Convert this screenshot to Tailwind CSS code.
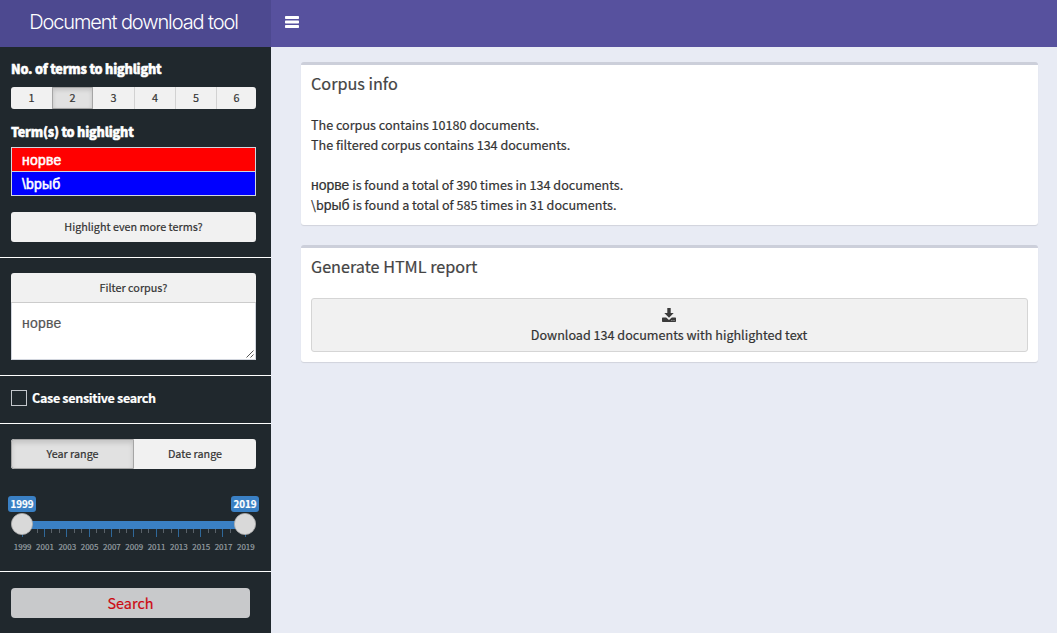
<!DOCTYPE html>
<html lang="en">
<head>
<meta charset="utf-8">
<title>Document download tool</title>
<script src="https://cdn.jsdelivr.net/npm/@tailwindcss/browser@4"></script>
</head>
<body class="flex h-[633px] w-[1057px] flex-col overflow-hidden bg-[#e8ebf4] font-['Noto_Sans_CJK_SC',sans-serif] text-[12.6px] leading-5 text-[#333] [-webkit-text-stroke:0.2px_currentColor]">
<header class="flex h-[47px] shrink-0 bg-[#57519e] text-white">
  <div class="flex w-[271px] items-center justify-center bg-[#4d4990] pr-[4px] pb-[3px] font-['Inter',sans-serif] text-[20px] font-light tracking-[-1.1px] whitespace-nowrap [-webkit-text-stroke:0]"><span>Document download tool</span></div>
  <button class="flex w-[42px] items-start justify-center pt-4" aria-label="Toggle sidebar">
    <svg width="14" height="12" viewBox="0 0 14 12" fill="white"><rect y="0" width="14" height="3" rx=".7"/><rect y="4.5" width="14" height="3" rx=".7"/><rect y="9" width="14" height="3" rx=".7"/></svg>
  </button>
</header>
<div class="flex min-h-0 flex-1">
  <aside class="flex w-[271px] shrink-0 flex-col bg-[#20282d]">
    <section class="h-[211px] border-b border-white pr-[15px] pl-[11px] pt-[12px]">
      <h3 class="h-5 font-black tracking-[-0.2px] text-white [-webkit-text-stroke:0.5px_white]">No. of terms to highlight</h3>
      <div class="mt-[8px] flex h-[22px] overflow-hidden rounded-[3px] bg-[#f1f1f1] text-center text-[10.8px] leading-[21px]">
        <div class="w-[41px]">1</div>
        <div class="w-[41px] border border-[#a5a5a5] bg-[#e1e1e1] leading-[19px] shadow-[inset_0_2px_4px_rgba(0,0,0,0.14)]">2</div>
        <div class="w-[41px]">3</div>
        <div class="w-[41px] border-l border-[#d2d2d2]">4</div>
        <div class="w-[41px] border-l border-[#d2d2d2]">5</div>
        <div class="flex-1 border-l border-[#d2d2d2]">6</div>
      </div>
      <h3 class="mt-[13px] h-5 font-black tracking-[-0.2px] text-white [-webkit-text-stroke:0.5px_white]">Term(s) to highlight</h3>
      <div class="mt-[5px] h-[49px] border border-[#d2d6de] font-['Liberation_Sans',sans-serif] text-sm leading-6 font-normal tracking-[0.2px] text-white [-webkit-text-stroke:0.5px_white]">
        <div class="h-[24px] border-b border-[#d2d6de] bg-[#f00] px-[10px]">норве</div>
        <div class="h-[23px] bg-[#00f] px-[10px]">\bрыб</div>
      </div>
      <button class="mt-4 block h-[30px] w-full rounded-[3px] bg-[#f1f1f1] pb-[2px] text-[10.8px]">Highlight even more terms?</button>
    </section>
    <section class="h-[118px] border-b border-white pr-[15px] pl-[11px] pt-[15px]">
      <button class="block h-[30px] w-full rounded-t-[3px] border-b border-[#ccc] bg-[#f1f1f1] pb-[2px] text-[10.8px]">Filter corpus?</button>
      <div class="flex h-[57px] items-end justify-between border border-t-0 border-[#d2d6de] bg-white pl-[10px] font-['Liberation_Sans',sans-serif] text-sm text-[#555]">
        <span class="self-start pt-[10px] tracking-[0.2px]">норве</span>
        <svg class="m-[1px]" width="8" height="8" viewBox="0 0 8 8" stroke="#444" fill="none" stroke-width=".9"><path d="M0.5 7.5L7.5 .5M4.5 7.5L7.5 4.5"/></svg>
      </div>
    </section>
    <section class="flex h-12 items-start border-b border-white px-[11px] pt-[12px] font-bold tracking-[-0.35px] text-white">
      <div class="mt-[2px] mr-[5px] size-4 border border-[#c4c7cc]"></div><span>Case sensitive search</span>
    </section>
    <section class="h-[148px] border-b border-white px-[8px] pt-[15px]">
      <div class="mr-[7px] ml-[3px] flex h-[30px] overflow-hidden rounded-[3px] bg-[#f1f1f1] text-center text-[10.8px] leading-[27px]">
        <div class="w-[123px] rounded-l-[3px] border border-[#a5a5a5] bg-[#e1e1e1] shadow-[inset_0_3px_5px_rgba(0,0,0,0.13)]">Year range</div>
        <div class="flex-1 pt-px">Date range</div>
      </div>
      <div class="mt-[27px] flex justify-between text-center text-[9.8px] leading-4 font-bold text-white">
        <span class="h-4 w-7 rounded-[3px] bg-[#3a80c4]">1999</span><span class="mr-1 h-4 w-7 rounded-[3px] bg-[#3a80c4]">2019</span>
      </div>
      <div class="mt-[1px] h-6 w-[255px]">
        <svg class="block" width="255" height="26" viewBox="0 0 255 26">
          <rect x="14" y="8" width="223" height="8" fill="#3a80c4"/>
          <path stroke="#2f6899" d="M14.5 16v8M36.5 16v8M58.5 16v8M81.5 16v8M103.5 16v8M125.5 16v8M148.5 16v8M170.5 16v8M192.5 16v8M214.5 16v8M237.5 16v8"/>
          <path stroke="#596168" d="M29.500 16v4M43.500 16v4M51.500 16v4M66.500 16v4M73.500 16v4M88.500 16v4M96.500 16v4M111.500 16v4M118.500 16v4M133.500 16v4M140.500 16v4M155.500 16v4M163.500 16v4M178.500 16v4M185.500 16v4M200.500 16v4M207.500 16v4M222.500 16v4"/>
          <g fill="#d9d9d9" stroke="#aaa" stroke-width=".8"><circle cx="14" cy="11" r="10.600"/><circle cx="237" cy="11" r="10.600"/></g>
        </svg>
      </div>
      <div class="mt-[3px] ml-[3.500px] grid w-[245.500px] grid-cols-11 text-center text-[8px] leading-[13px] text-[#959ea2]">
        <span>1999</span><span>2001</span><span>2003</span><span>2005</span><span>2007</span><span>2009</span><span>2011</span><span>2013</span><span>2015</span><span>2017</span><span>2019</span>
      </div>
    </section>
    <section class="px-[11px] pt-4">
      <button class="block h-[30px] w-[239px] rounded-[4px] bg-[#c8c9cb] text-[14.4px] text-[#cc0a12]">Search</button>
    </section>
  </aside>
  <main class="flex-1 pt-[15px] pr-[19px] pl-[30px]">
    <section class="h-[163px] rounded-[3px] border-t-[3px] border-[#cccfda] bg-white px-[10px] shadow-[0_1px_1px_rgba(0,0,0,0.1)]">
      <h2 class="pt-[8px] text-[16.2px] leading-5 text-[#444]">Corpus info</h2>
      <div class="mt-[22px]">
        <p class="h-5">The corpus contains 10180 documents.</p>
        <p class="h-5">The filtered corpus contains 134 documents.</p>
        <p class="mt-5 h-5"><span class="font-['Liberation_Sans',sans-serif] text-sm leading-none">норве</span> is found a total of 390 times in 134 documents.</p>
        <p class="h-5">\b<span class="font-['Liberation_Sans',sans-serif] text-sm leading-none">рыб</span> is found a total of 585 times in 31 documents.</p>
      </div>
    </section>
    <section class="mt-5 h-[117px] rounded-[3px] border-t-[3px] border-[#cccfda] bg-white px-[10px] shadow-[0_1px_1px_rgba(0,0,0,0.1)]">
      <h2 class="pt-[8px] text-[16.2px] leading-5 text-[#444]">Generate HTML report</h2>
      <button class="mt-[22px] flex h-[54px] w-full flex-col items-center rounded-[3px] border border-[#d5d5d5] bg-[#f1f1f1] pt-[9px] pr-px">
        <svg width="14" height="14" viewBox="0 0 14 14" fill="#3b3b3b"><path d="M5.300 0h3.400v5h3L7 9.700 2.300 5h3z"/><path fill-rule="evenodd" d="M.7 9.500h3.500L7 12l2.800-2.500h3.500q.7 0 .7.700v3.100q0 .7-.7.700H.7Q0 14 0 13.300v-3.100q0-.7.700-.7zM9.500 12.200v.8h.8v-.8zM11.600 12.200v.8h.8v-.8z"/></svg>
        <span class="mt-[3px]">Download 134 documents with highlighted text</span>
      </button>
    </section>
  </main>
</div>
</body>
</html>
